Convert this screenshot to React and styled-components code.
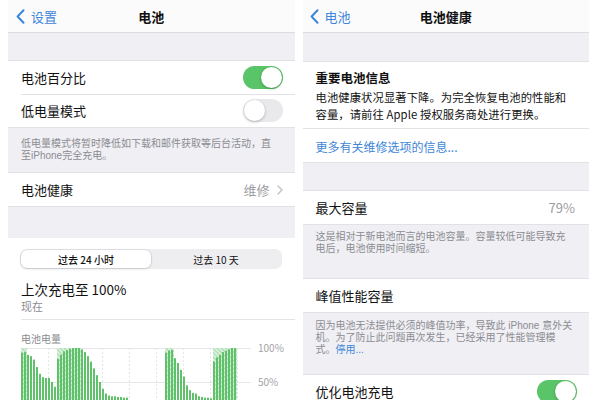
import styled, { createGlobalStyle } from 'styled-components';

const GlobalStyle = createGlobalStyle`
  html, body {
    margin: 0;
    padding: 0;
    background: #fff;
    overflow: hidden;
  }
  body {
    font-family: "Noto Sans CJK SC", "Noto Sans", "Liberation Sans", sans-serif;
    color: #111;
  }
`;

const Page = styled.div`
  display: flex;
  gap: 8px;
  padding: 0 8px;
  height: 400px;
  overflow: hidden;
`;

const Screen = styled.div`
  flex: 1;
  min-width: 0;
  background: #efeff4;
  display: flex;
  flex-direction: column;
`;

const NavBar = styled.div`
  height: 33px;
  flex-shrink: 0;
  display: grid;
  grid-template-columns: 1fr auto 1fr;
  align-items: center;
  background: #fbfbfc;
  border-bottom: 1px solid #dcdce0;
  box-sizing: border-box;
`;

const Back = styled.div`
  display: flex;
  align-items: center;
  gap: 6px;
  padding-left: ${(p) => p.$pad || 8}px;
  color: #3e86d8;
  font-size: 13px;
`;

const NavTitle = styled.div`
  font-size: 13px;
  font-weight: 600;
`;

const Spacer = styled.div`
  height: ${(p) => p.$h}px;
  flex-shrink: 0;
`;

const Group = styled.div`
  background: #fff;
  border-top: 1px solid #e2e2e6;
  border-bottom: 1px solid #e2e2e6;
`;

const Row = styled.div`
  position: relative;
  height: 33px;
  box-sizing: border-box;
  display: flex;
  align-items: center;
  justify-content: space-between;
  padding: 0 12px 0 13px;
  font-size: 13px;
  & + &::before {
    content: '';
    position: absolute;
    top: 0;
    left: 13px;
    right: 0;
    border-top: 1px solid #e2e2e6;
  }
`;

const Detail = styled.div`
  display: flex;
  align-items: center;
  gap: 7px;
  padding-right: ${(p) => p.$pr || 0}px;
  color: #9d9da2;
  font-size: 13px;
`;

const Footer = styled.div`
  padding: ${(p) => p.$pad};
  font-family: "Liberation Sans", "Noto Sans CJK SC", sans-serif;
  font-size: 10px;
  line-height: 12px;
  color: #8c8c91;
  white-space: nowrap;
`;

const Link = styled.span`
  color: #3e86d8;
`;

const Track = styled.div`
  width: 40px;
  height: 23px;
  border-radius: 12px;
  background: ${(p) => (p.$on ? '#5ac468' : '#e9e9eb')};
  padding: 1px;
  box-sizing: border-box;
  display: flex;
  justify-content: ${(p) => (p.$on ? 'flex-end' : 'flex-start')};
`;

const Knob = styled.div`
  width: 21px;
  height: 21px;
  border-radius: 50%;
  background: #fff;
  box-shadow: 0 1px 3px rgba(0, 0, 0, 0.25);
`;

const Usage = styled.div`
  background: #fff;
  flex: 1;
  padding: 11px 0 0 13px;
`;

const Segmented = styled.div`
  display: flex;
  width: 262px;
  height: 20px;
  box-sizing: border-box;
  padding: 1px;
  margin-left: -1px;
  border-radius: 7px;
  background: #eeeef0;
`;

const Segment = styled.div`
  flex: 1;
  display: flex;
  align-items: center;
  justify-content: center;
  font-size: 10px;
  font-weight: ${(p) => (p.$active ? 500 : 400)};
  border-radius: 6px;
  background: ${(p) => (p.$active ? '#fff' : 'transparent')};
  box-shadow: ${(p) => (p.$active ? '0 0 0 0.5px rgba(0,0,0,0.12), 0 1px 3px rgba(0,0,0,0.12)' : 'none')};
`;

const LastCharge = styled.div`
  margin-top: 11px;
  font-size: 13.5px;
  line-height: 18px;
`;

const SubText = styled.div`
  font-size: 11px;
  line-height: 14px;
  color: #8c8c91;
  margin-top: 1px;
`;

const Divider = styled.div`
  border-top: 1px solid #e4e4e8;
  margin-top: 6px;
`;

const ChartTitle = styled.div`
  margin-top: 12px;
  font-size: 10px;
  line-height: 13px;
  color: #8c8c91;
`;

const ChartRow = styled.div`
  display: flex;
  margin-top: 3px;
`;

const Axis = styled.div`
  display: flex;
  flex-direction: column;
  margin-left: 7px;
  font-size: 10px;
  line-height: 12px;
  color: #a3a3a8;
`;

const AxisLabel = styled.div`
  margin-top: ${(p) => p.$mt}px;
`;

const Info = styled.div`
  padding: 8px 13px 5px;
`;

const InfoTitle = styled.div`
  font-size: 12.5px;
  font-weight: 600;
  line-height: 16px;
`;

const InfoBody = styled.div`
  margin-top: 3px;
  font-size: 11.3px;
  line-height: 17px;
  letter-spacing: 0.1px;
`;

const LinkRow = styled.div`
  height: 34px;
  display: flex;
  align-items: center;
  padding: 1px 13px 0;
  box-sizing: border-box;
  color: #3e86d8;
  font-size: 12px;
  border-top: 1px solid #e2e2e6;
`;

function BackChevron() {
  return (
    <svg width="9" height="15" viewBox="0 0 9 15">
      <path d="M7.5 1.2 L1.6 7.5 L7.5 13.8" fill="none" stroke="#3e86d8" strokeWidth="2" strokeLinecap="round" strokeLinejoin="round" />
    </svg>
  );
}

function SmallChevron() {
  return (
    <svg width="6" height="10" viewBox="0 0 6 10">
      <path d="M1 1 L5 5 L1 9" fill="none" stroke="#c2c2c6" strokeWidth="1.4" strokeLinecap="round" strokeLinejoin="round" />
    </svg>
  );
}

function Toggle({ on }) {
  return (
    <Track $on={on}>
      <Knob />
    </Track>
  );
}

// [level, charging]
const bars = [
  [93, 1], [94, 1], [90, 0], [88, 0], [83, 0], [72, 0], [62, 0], [57, 0], [56, 0], [56, 0], [50, 0], [43, 0],
  [84, 1], [90, 1], [95, 1], [97, 1], [99, 1], [100, 1], [100, 1], [100, 1],
  [98, 0], [94, 0], [88, 0], [80, 0], [70, 0], [60, 0], [50, 0], [40, 0], [33, 0],
  [30, 0], [29, 0], [29, 0], [28, 0], [28, 0], [27, 0], [27, 0],
  [16, 0], [16, 0], [15, 0], [15, 0], [14, 0], [14, 0], [13, 0], [13, 0], [12, 0], [12, 0], [11, 0], [11, 0],
  [93, 1], [96, 1], [97, 1],
  [85, 0], [78, 0], [68, 0], [58, 0],
  [45, 0], [38, 0], [34, 0], [33, 0],
  [29, 0], [28, 0], [27, 0], [27, 0], [26, 0],
  [80, 1], [86, 1], [90, 1], [94, 1], [96, 1], [98, 1], [100, 1], [100, 1],
];

function BatteryChart() {
  const H = 68;
  const pitch = 3;
  return (
    <svg width="230" height="70" viewBox="0 0 230 70" style={{ overflow: 'visible' }}>
      <defs>
        <pattern id="hatch" width="3" height="3" patternUnits="userSpaceOnUse" patternTransform="rotate(-45)">
          <rect width="3" height="3" fill="#d9f0dc" />
          <line x1="0" y1="0" x2="0" y2="3" stroke="#8fd198" strokeWidth="1.4" />
        </pattern>
      </defs>
      {[0, 34, 68].map((y) => (
        <line key={y} x1="0" x2="230" y1={y + 0.5} y2={y + 0.5} stroke="#e6e6ea" strokeWidth="1" />
      ))}
      {[0, 1, 2, 3, 4, 5, 6, 7, 8].map((i) => (
        <line key={i} x1={i * 27 + 0.5} x2={i * 27 + 0.5} y1="0" y2={H} stroke="#e6e6ea" strokeWidth="1" strokeDasharray="2 2" />
      ))}
      {bars.map(([v, c], i) =>
        c ? <rect key={'h' + i} x={i * pitch} y="0" width={pitch} height={H} fill="url(#hatch)" /> : null
      )}
      {bars.map(([v], i) => {
        const h = v * 0.68;
        return <rect key={i} x={i * pitch} y={H - h} width="2" height={h} fill="#5fc26b" />;
      })}
    </svg>
  );
}

function BatteryScreen() {
  return (
    <Screen>
      <NavBar>
        <Back $pad={8}>
          <BackChevron />
          设置
        </Back>
        <NavTitle>电池</NavTitle>
        <div />
      </NavBar>
      <Spacer $h={27} />
      <Group>
        <Row>
          电池百分比
          <Toggle on />
        </Row>
        <Row>
          低电量模式
          <Toggle />
        </Row>
      </Group>
      <Footer $pad="10px 13px 10px">
        低电量模式将暂时降低如下载和邮件获取等后台活动，直
        <br />
        至iPhone完全充电。
      </Footer>
      <Group>
        <Row>
          电池健康
          <Detail>
            维修
            <SmallChevron />
          </Detail>
        </Row>
      </Group>
      <Spacer $h={31} />
      <Usage>
        <Segmented>
          <Segment $active>过去 24 小时</Segment>
          <Segment>过去 10 天</Segment>
        </Segmented>
        <LastCharge>上次充电至 100%</LastCharge>
        <SubText>现在</SubText>
        <Divider />
        <ChartTitle>电池电量</ChartTitle>
        <ChartRow>
          <BatteryChart />
          <Axis>
            <AxisLabel $mt={-6}>100%</AxisLabel>
            <AxisLabel $mt={22}>50%</AxisLabel>
          </Axis>
        </ChartRow>
      </Usage>
    </Screen>
  );
}

function HealthScreen() {
  return (
    <Screen>
      <NavBar>
        <Back $pad={7}>
          <BackChevron />
          电池
        </Back>
        <NavTitle>电池健康</NavTitle>
        <div />
      </NavBar>
      <Spacer $h={28} />
      <Group>
        <Info>
          <InfoTitle>重要电池信息</InfoTitle>
          <InfoBody>电池健康状况显著下降。为完全恢复电池的性能和容量，请前往 Apple 授权服务商处进行更换。</InfoBody>
        </Info>
        <LinkRow>更多有关维修选项的信息...</LinkRow>
      </Group>
      <Spacer $h={27} />
      <Group>
        <Row>
          最大容量
          <Detail $pr={2}>79%</Detail>
        </Row>
      </Group>
      <Footer $pad="6px 13px 23px">
        这是相对于新电池而言的电池容量。容量较低可能导致充
        <br />
        电后，电池使用时间缩短。
      </Footer>
      <Group>
        <Row>峰值性能容量</Row>
      </Group>
      <Footer $pad="7px 13px 18px">
        因为电池无法提供必须的峰值功率，导致此 iPhone 意外关
        <br />
        机。为了防止此问题再次发生，已经采用了性能管理模
        <br />
        式。<Link>停用...</Link>
      </Footer>
      <Group>
        <Row>
          优化电池充电
          <Toggle on />
        </Row>
      </Group>
    </Screen>
  );
}

export default function App() {
  return (
    <>
      <GlobalStyle />
      <Page>
        <BatteryScreen />
        <HealthScreen />
      </Page>
    </>
  );
}
